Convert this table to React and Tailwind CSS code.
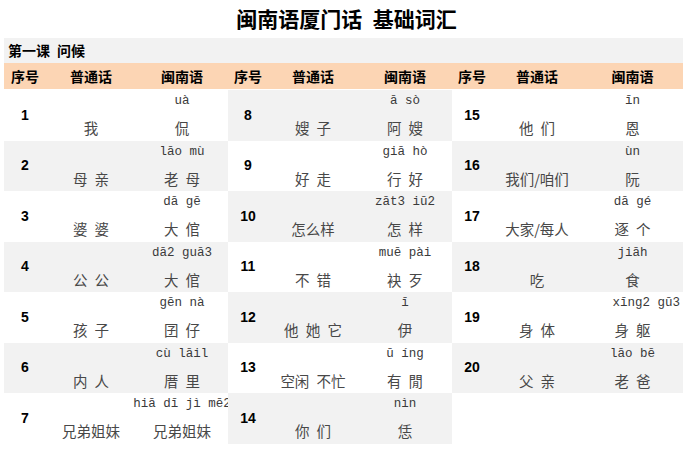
const groups = [
  {
    widths: ["w-[42px]", "w-[90px]", "w-[92px]"],
    grayFirst: false,
    rows: [
      { n: "1", zh: "我", py: "uà", mn: "侃" },
      { n: "2", zh: "母 亲", py: "lāo mù", mn: "老 母" },
      { n: "3", zh: "婆 婆", py: "dā gē", mn: "大 倌" },
      { n: "4", zh: "公 公", py: "dā2 guā3", mn: "大 倌" },
      { n: "5", zh: "孩 子", py: "gēn nà", mn: "囝 仔" },
      { n: "6", zh: "内 人", py: "cù lāil", mn: "厝 里" },
      { n: "7", zh: "兄弟姐妹", py: "hiā dī jì mē2", mn: "兄弟姐妹" },
    ],
  },
  {
    widths: ["w-[40px]", "w-[90px]", "w-[94px]"],
    grayFirst: true,
    rows: [
      { n: "8", zh: "嫂 子", py: "ā sò", mn: "阿 嫂" },
      { n: "9", zh: "好 走", py: "giā hò", mn: "行 好" },
      { n: "10", zh: "怎么样", py: "zāt3 iū2", mn: "怎 样" },
      { n: "11", zh: "不 错", py: "muē pài", mn: "袂 歹" },
      { n: "12", zh: "他 她 它", py: "ī", mn: "伊" },
      { n: "13", zh: "空闲 不忙", py: "ū íng", mn: "有 閒" },
      { n: "14", zh: "你 们", py: "nìn", mn: "恁" },
    ],
  },
  {
    widths: ["w-[40px]", "w-[90px]", "w-[101px]"],
    grayFirst: false,
    rows: [
      { n: "15", zh: "他 们", py: "īn", mn: "恩" },
      { n: "16", zh: "我们/咱们", py: "ùn", mn: "阮" },
      { n: "17", zh: "大家/每人", py: "dā gé", mn: "逐 个" },
      { n: "18", zh: "吃", py: "jiāh", mn: "食" },
      { n: "19", zh: "身 体", py: "xīng2 gū3", mn: "身 躯", right: true },
      { n: "20", zh: "父 亲", py: "lāo bē", mn: "老 爸" },
      null,
    ],
  },
];

const cjk = "font-['Noto_Sans_CJK_SC',sans-serif]";

// CJK text uses a half-em gap where the sheet has a space
const gap = (s) => s.replace(/ /g, "\u2002");

function Row({ row, widths, gray }) {
  const bg = gray ? "bg-[#f2f2f2]" : "bg-white";
  if (!row) return <div className={`h-[50.5px] ${bg}`} />;
  return (
    <div className={`flex h-[50.5px] ${bg}`}>
      <div
        className={`${widths[0]} flex items-center justify-center font-['Liberation_Sans',sans-serif] text-[14px] font-bold text-black`}
      >
        {row.n}
      </div>
      <div
        className={`${widths[1]} pt-[27px] text-center whitespace-nowrap ${cjk} text-[14.5px] leading-[22px] text-[#484848]`}
      >
        {gap(row.zh)}
      </div>
      <div className={`${widths[2]} flex flex-col`}>
        <div
          className={`h-[22px] flex ${row.right ? "justify-end pr-[3px]" : "justify-center"} whitespace-nowrap font-['Liberation_Mono',monospace] text-[12.5px] leading-[22px] text-[#3a3a3a]`}
        >
          {row.py}
        </div>
        <div
          className={`mt-[5px] text-center whitespace-nowrap ${cjk} text-[14.5px] leading-[22px] text-[#484848]`}
        >
          {gap(row.mn)}
        </div>
      </div>
    </div>
  );
}

export default function App() {
  return (
    <div className={`w-[693px] h-[450px] bg-white ${cjk} overflow-hidden`}>
      <div className="h-[38px] flex items-center justify-center text-[21px] font-bold text-black">
        {gap("闽南语厦门话 基础词汇")}
      </div>
      <div className="ml-[4px] w-[679px]">
        <div className="h-[25px] bg-[#f2f2f2] flex items-center pl-[4px] text-[14px] font-bold text-black">
          {gap("第一课 问候")}
        </div>
        <div className="h-[26px] bg-[#fcd5b4] flex text-[14px] font-bold text-black">
          {groups.map((g, gi) => (
            <div key={gi} className="flex">
              {["序号", "普通话", "闽南语"].map((h, i) => (
                <div
                  key={h}
                  className={`${g.widths[i]} flex items-center justify-center`}
                >
                  {h}
                </div>
              ))}
            </div>
          ))}
        </div>
        <div className="mt-[1px] flex">
          {groups.map((g, gi) => (
            <div key={gi} className="flex flex-col">
              {g.rows.map((r, ri) => (
                <Row
                  key={ri}
                  row={r}
                  widths={g.widths}
                  gray={g.grayFirst ? ri % 2 === 0 : ri % 2 === 1}
                />
              ))}
            </div>
          ))}
        </div>
      </div>
    </div>
  );
}
